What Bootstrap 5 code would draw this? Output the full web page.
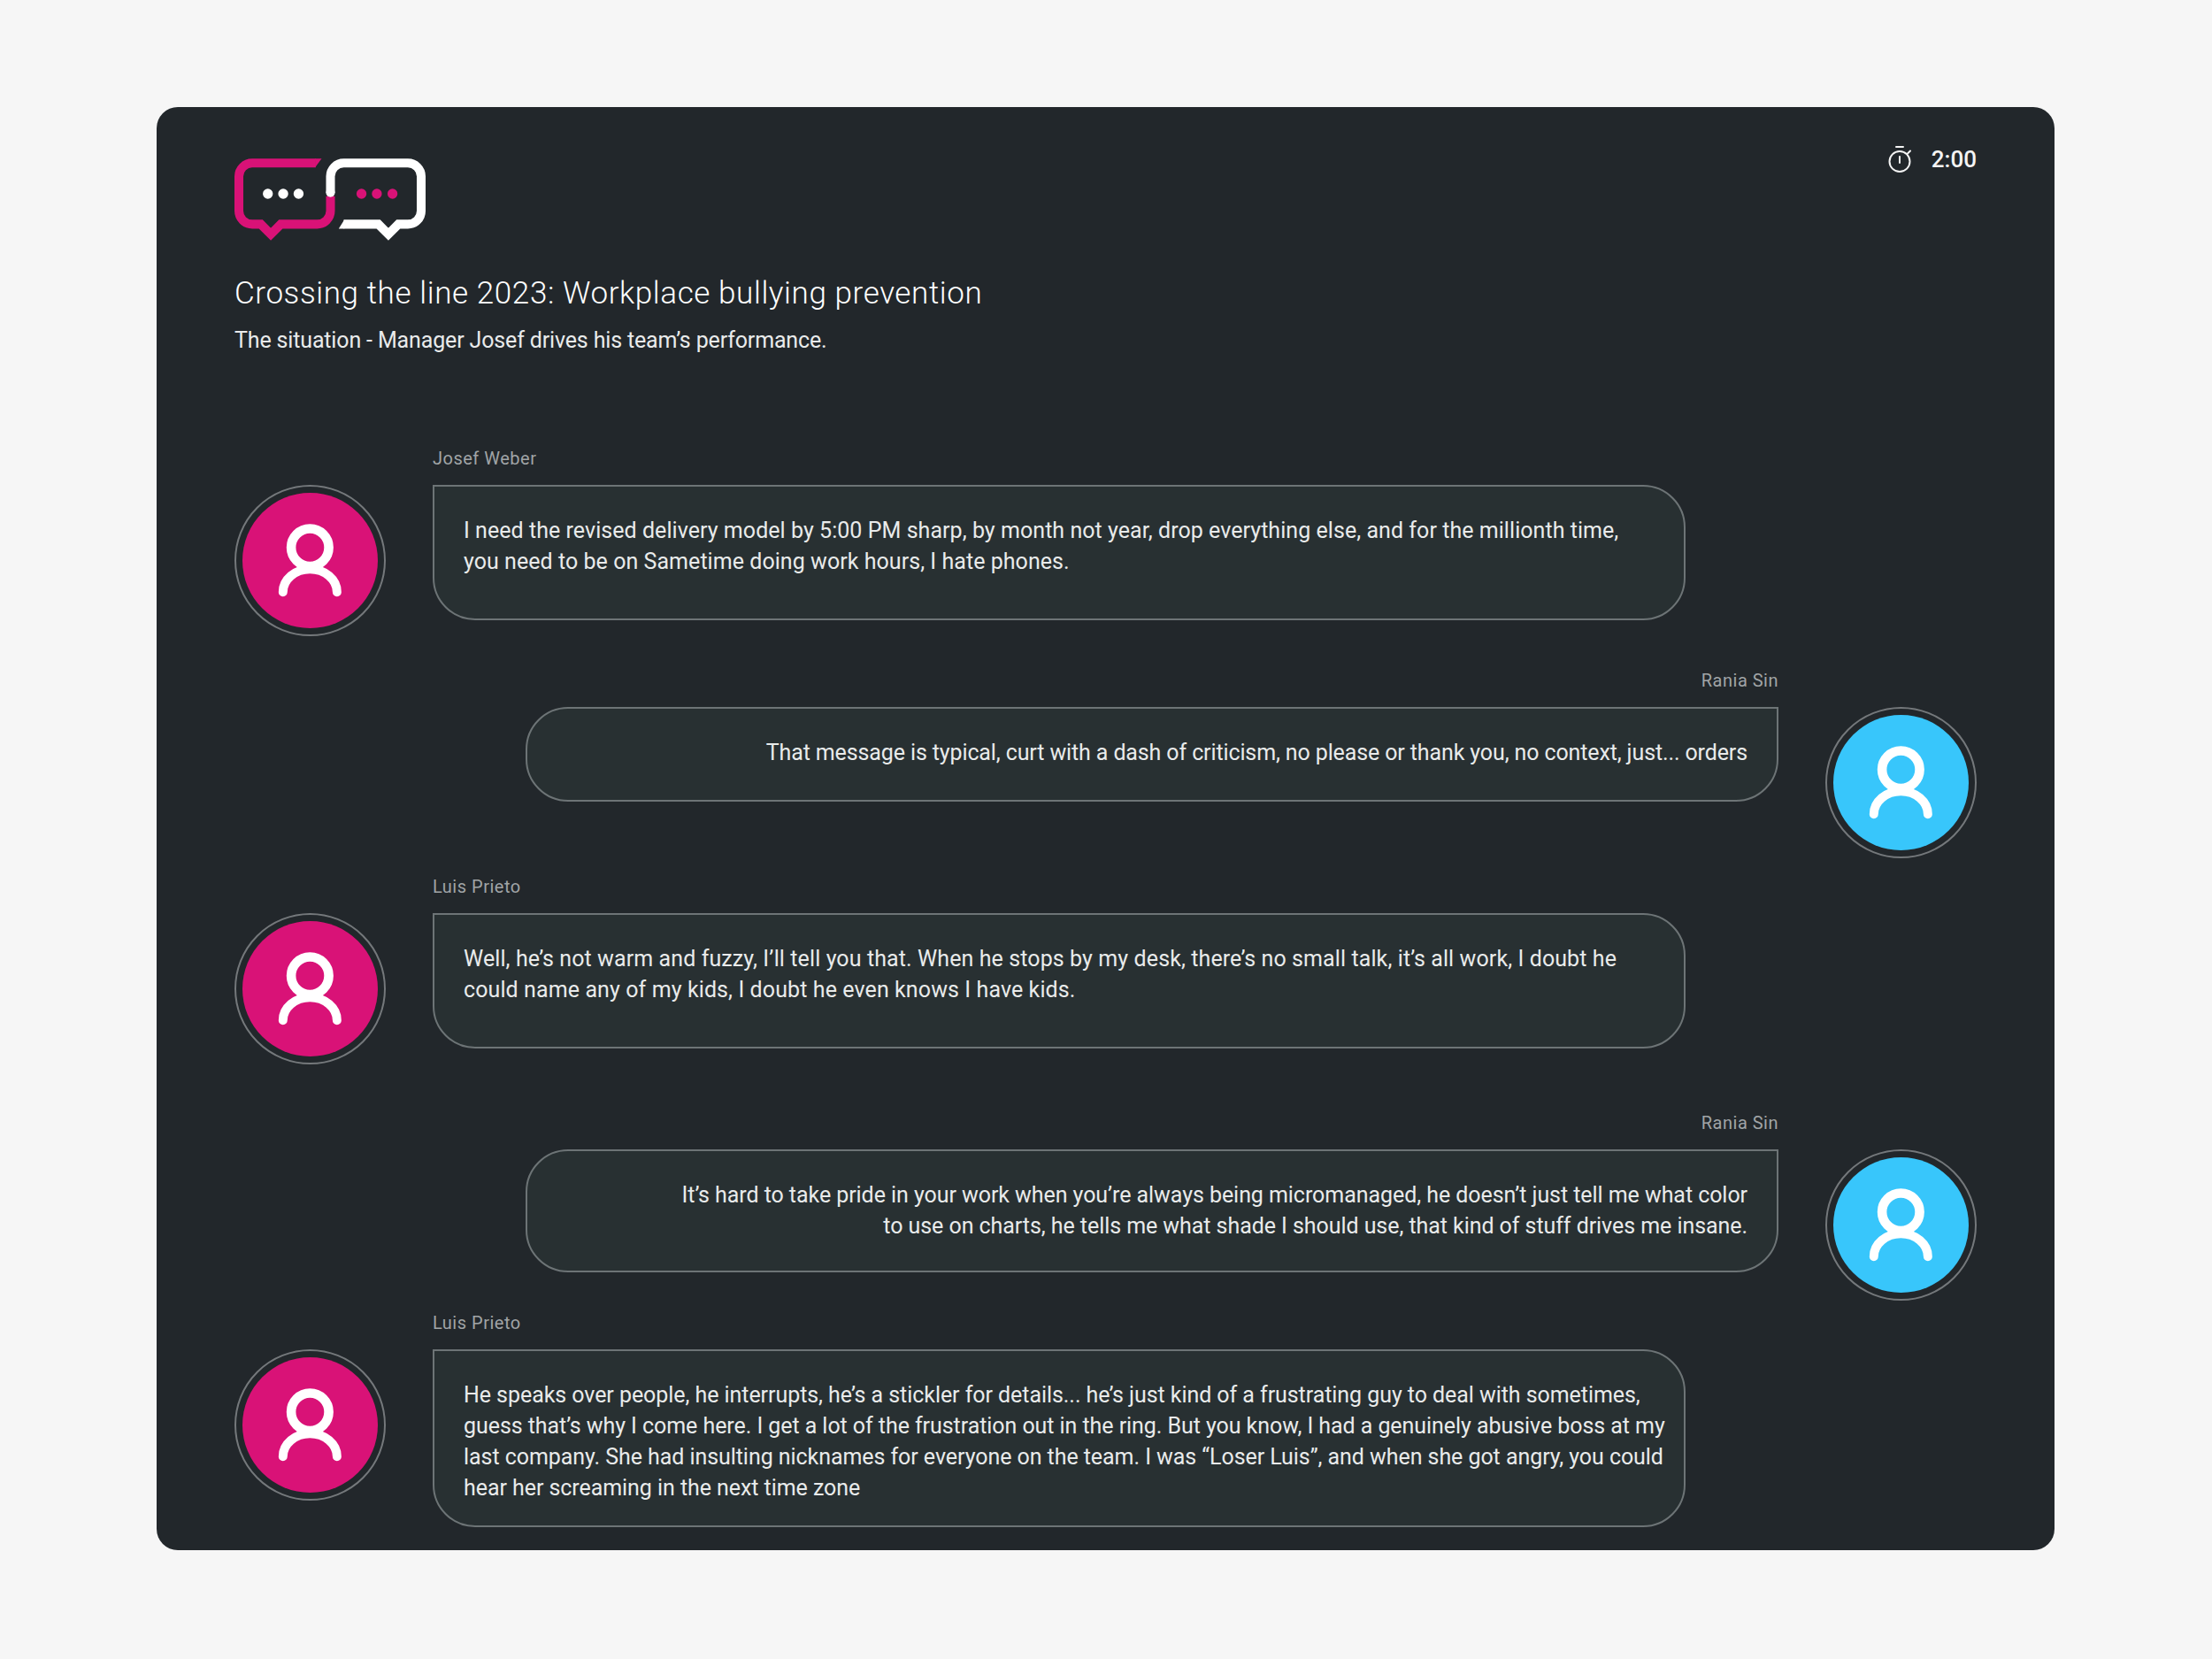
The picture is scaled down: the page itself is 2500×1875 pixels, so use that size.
<!DOCTYPE html>
<html lang="en">
<head>
  <meta charset="UTF-8" />
  <title>Crossing the line 2023</title>
  <link href="https://cdn.jsdelivr.net/npm/bootstrap@5.3.3/dist/css/bootstrap.min.css" rel="stylesheet" />
  <style>
    body {
      background: #f6f6f6;
      font-family: "Roboto", "Liberation Sans", sans-serif;
    }

    .stage {
      width: 2145px;
      height: 1631px;
      margin: 121px 0 0 177px;
      padding: 42px 88px 0;
      background: #22272b;
      border-radius: 24px;
      color: #f4f4f4;
    }

    .brand-logo { width: 216px; height: 93px; margin-top: 16px; display: block; }

    .timer { font-size: 26px; font-weight: 500; line-height: 32px; gap: 21px; margin-top: 1px; }

    .deck-title { font-size: 35px; line-height: 44px; font-weight: 300; margin: 38px 0 0; letter-spacing: .6px; color: #fff; }
    .deck-sub { font-size: 25px; line-height: 35px; margin: 13px 0 0; letter-spacing: -.15px; color: #e9ebeb; }

    .chat-list { margin-top: 101px; }

    .chat-row { gap: 53px; }
    .chat-row-b { margin-top: 35px; }
    .chat-row-c { margin-top: 17px; }
    .chat-row-d { margin-top: 51px; }
    .chat-row-e { margin-top: 10px; }

    .speaker { font-size: 20px; line-height: 30px; height: 45px; color: #a0a4a6; letter-spacing: .5px; }

    .avatar-wrap {
      width: 171px;
      height: 171px;
      margin-top: 45px;
      padding: 7px;
      border: 2px solid #74787b;
      border-radius: 50%;
      flex-shrink: 0;
    }
    .avatar-wrap svg { width: 153px; height: 153px; display: block; border-radius: 50%; }
    .avatar-pink svg { background: #d91277; }
    .avatar-blue svg { background: #38c6fb; }

    .bubble {
      width: 1416px;
      padding: 32px 33px 0;
      background: #283032;
      border: 2px solid #6d7476;
      border-radius: 48px;
      font-size: 25px;
      line-height: 35px;
      letter-spacing: .05px;
      color: #e9ebeb;
      white-space: nowrap;
    }
    .bubble-left { border-top-left-radius: 0; }
    .bubble-right { border-top-right-radius: 0; }
    .bubble-h153 { height: 153px; }
    .bubble-h107 { height: 107px; }
    .bubble-h139 { height: 139px; }
    .bubble-h201 { height: 201px; }
    .fit-wide { letter-spacing: .1px; }
    .fit-snug { letter-spacing: -.06px; }
    .fit-tight { letter-spacing: -.12px; }
  </style>
</head>
<body>

  <div class="stage">

    <!-- Header -->
    <div class="d-flex justify-content-between align-items-start">
      <svg class="brand-logo" viewBox="285 208 647 277" fill="none">
        <path d="M560 223H345a45 45 0 0 0-45 45V385a45 45 0 0 0 45 45H374L408 464L442 430H565a45 45 0 0 0 45-45V335" stroke="#d91277" stroke-width="30" />
        <polygon points="558,208 580,208 558,238" fill="#d91277" />
        <path d="M610 325V268a45 45 0 0 1 45-45H872a45 45 0 0 1 45 45V385a45 45 0 0 1-45 45H840L806 464L772 430H655" stroke="#fff" stroke-width="30" />
        <circle cx="610" cy="323" r="15" fill="#fff" />
        <polygon points="657,415 657,445 638,445" fill="#fff" />
        <circle cx="398" cy="327" r="17" fill="#fff" />
        <circle cx="450" cy="327" r="17" fill="#fff" />
        <circle cx="502" cy="327" r="17" fill="#fff" />
        <circle cx="715" cy="327" r="17" fill="#d91277" />
        <circle cx="767" cy="327" r="17" fill="#d91277" />
        <circle cx="820" cy="327" r="17" fill="#d91277" />
      </svg>
      <div class="timer d-flex align-items-center">
        <svg width="28" height="32" viewBox="0 0 28 32" fill="none" stroke="#f4f4f4" stroke-width="2">
          <circle cx="13" cy="18.5" r="11.5" />
          <path d="M9 2H17M13 13V20M22 9.5L25 6.5" stroke-linecap="round" />
        </svg>
        <span>2:00</span>
      </div>
    </div>

    <h1 class="deck-title">Crossing the line 2023: Workplace bullying prevention</h1>
    <p class="deck-sub">The situation - Manager Josef drives his team’s performance.</p>

    <!-- Conversation -->
    <div class="chat-list">

      <div class="chat-row d-flex">
        <div class="avatar-wrap avatar-pink">
          <svg viewBox="72 172 461 461" fill="none" stroke="#fff" stroke-linecap="round"><circle cx="302" cy="358" r="64" stroke-width="32" /><path d="M210 510A92 78 0 0 1 394 510" stroke-width="30" /></svg>
        </div>
        <div>
          <div class="speaker">Josef Weber</div>
          <div class="bubble bubble-left bubble-h153">I need the revised delivery model by 5:00 PM sharp, by month not year, drop everything else, and for the millionth time,<br>you need to be on Sametime doing work hours, I hate phones.</div>
        </div>
      </div>

      <div class="chat-row chat-row-b d-flex flex-row-reverse">
        <div class="avatar-wrap avatar-blue">
          <svg viewBox="72 172 461 461" fill="none" stroke="#fff" stroke-linecap="round"><circle cx="302" cy="358" r="64" stroke-width="32" /><path d="M210 510A92 78 0 0 1 394 510" stroke-width="30" /></svg>
        </div>
        <div>
          <div class="speaker text-end">Rania Sin</div>
          <div class="bubble bubble-right bubble-h107 text-end fit-tight">That message is typical, curt with a dash of criticism, no please or thank you, no context, just... orders</div>
        </div>
      </div>

      <div class="chat-row chat-row-c d-flex">
        <div class="avatar-wrap avatar-pink">
          <svg viewBox="72 172 461 461" fill="none" stroke="#fff" stroke-linecap="round"><circle cx="302" cy="358" r="64" stroke-width="32" /><path d="M210 510A92 78 0 0 1 394 510" stroke-width="30" /></svg>
        </div>
        <div>
          <div class="speaker">Luis Prieto</div>
          <div class="bubble bubble-left bubble-h153 fit-wide">Well, he’s not warm and fuzzy, I’ll tell you that. When he stops by my desk, there’s no small talk, it’s all work, I doubt he<br>could name any of my kids, I doubt he even knows I have kids.</div>
        </div>
      </div>

      <div class="chat-row chat-row-d d-flex flex-row-reverse">
        <div class="avatar-wrap avatar-blue">
          <svg viewBox="72 172 461 461" fill="none" stroke="#fff" stroke-linecap="round"><circle cx="302" cy="358" r="64" stroke-width="32" /><path d="M210 510A92 78 0 0 1 394 510" stroke-width="30" /></svg>
        </div>
        <div>
          <div class="speaker text-end">Rania Sin</div>
          <div class="bubble bubble-right bubble-h139 text-end fit-snug">It’s hard to take pride in your work when you’re always being micromanaged, he doesn’t just tell me what color<br>to use on charts, he tells me what shade I should use, that kind of stuff drives me insane.</div>
        </div>
      </div>

      <div class="chat-row chat-row-e d-flex">
        <div class="avatar-wrap avatar-pink">
          <svg viewBox="72 172 461 461" fill="none" stroke="#fff" stroke-linecap="round"><circle cx="302" cy="358" r="64" stroke-width="32" /><path d="M210 510A92 78 0 0 1 394 510" stroke-width="30" /></svg>
        </div>
        <div>
          <div class="speaker">Luis Prieto</div>
          <div class="bubble bubble-left bubble-h201 fit-snug">He speaks over people, he interrupts, he’s a stickler for details... he’s just kind of a frustrating guy to deal with sometimes,<br>guess that’s why I come here. I get a lot of the frustration out in the ring. But you know, I had a genuinely abusive boss at my<br>last company. She had insulting nicknames for everyone on the team. I was “Loser Luis”, and when she got angry, you could<br>hear her screaming in the next time zone</div>
        </div>
      </div>

    </div>
  </div>

  <script src="https://cdn.jsdelivr.net/npm/bootstrap@5.3.3/dist/js/bootstrap.bundle.min.js"></script>
</body>
</html>
